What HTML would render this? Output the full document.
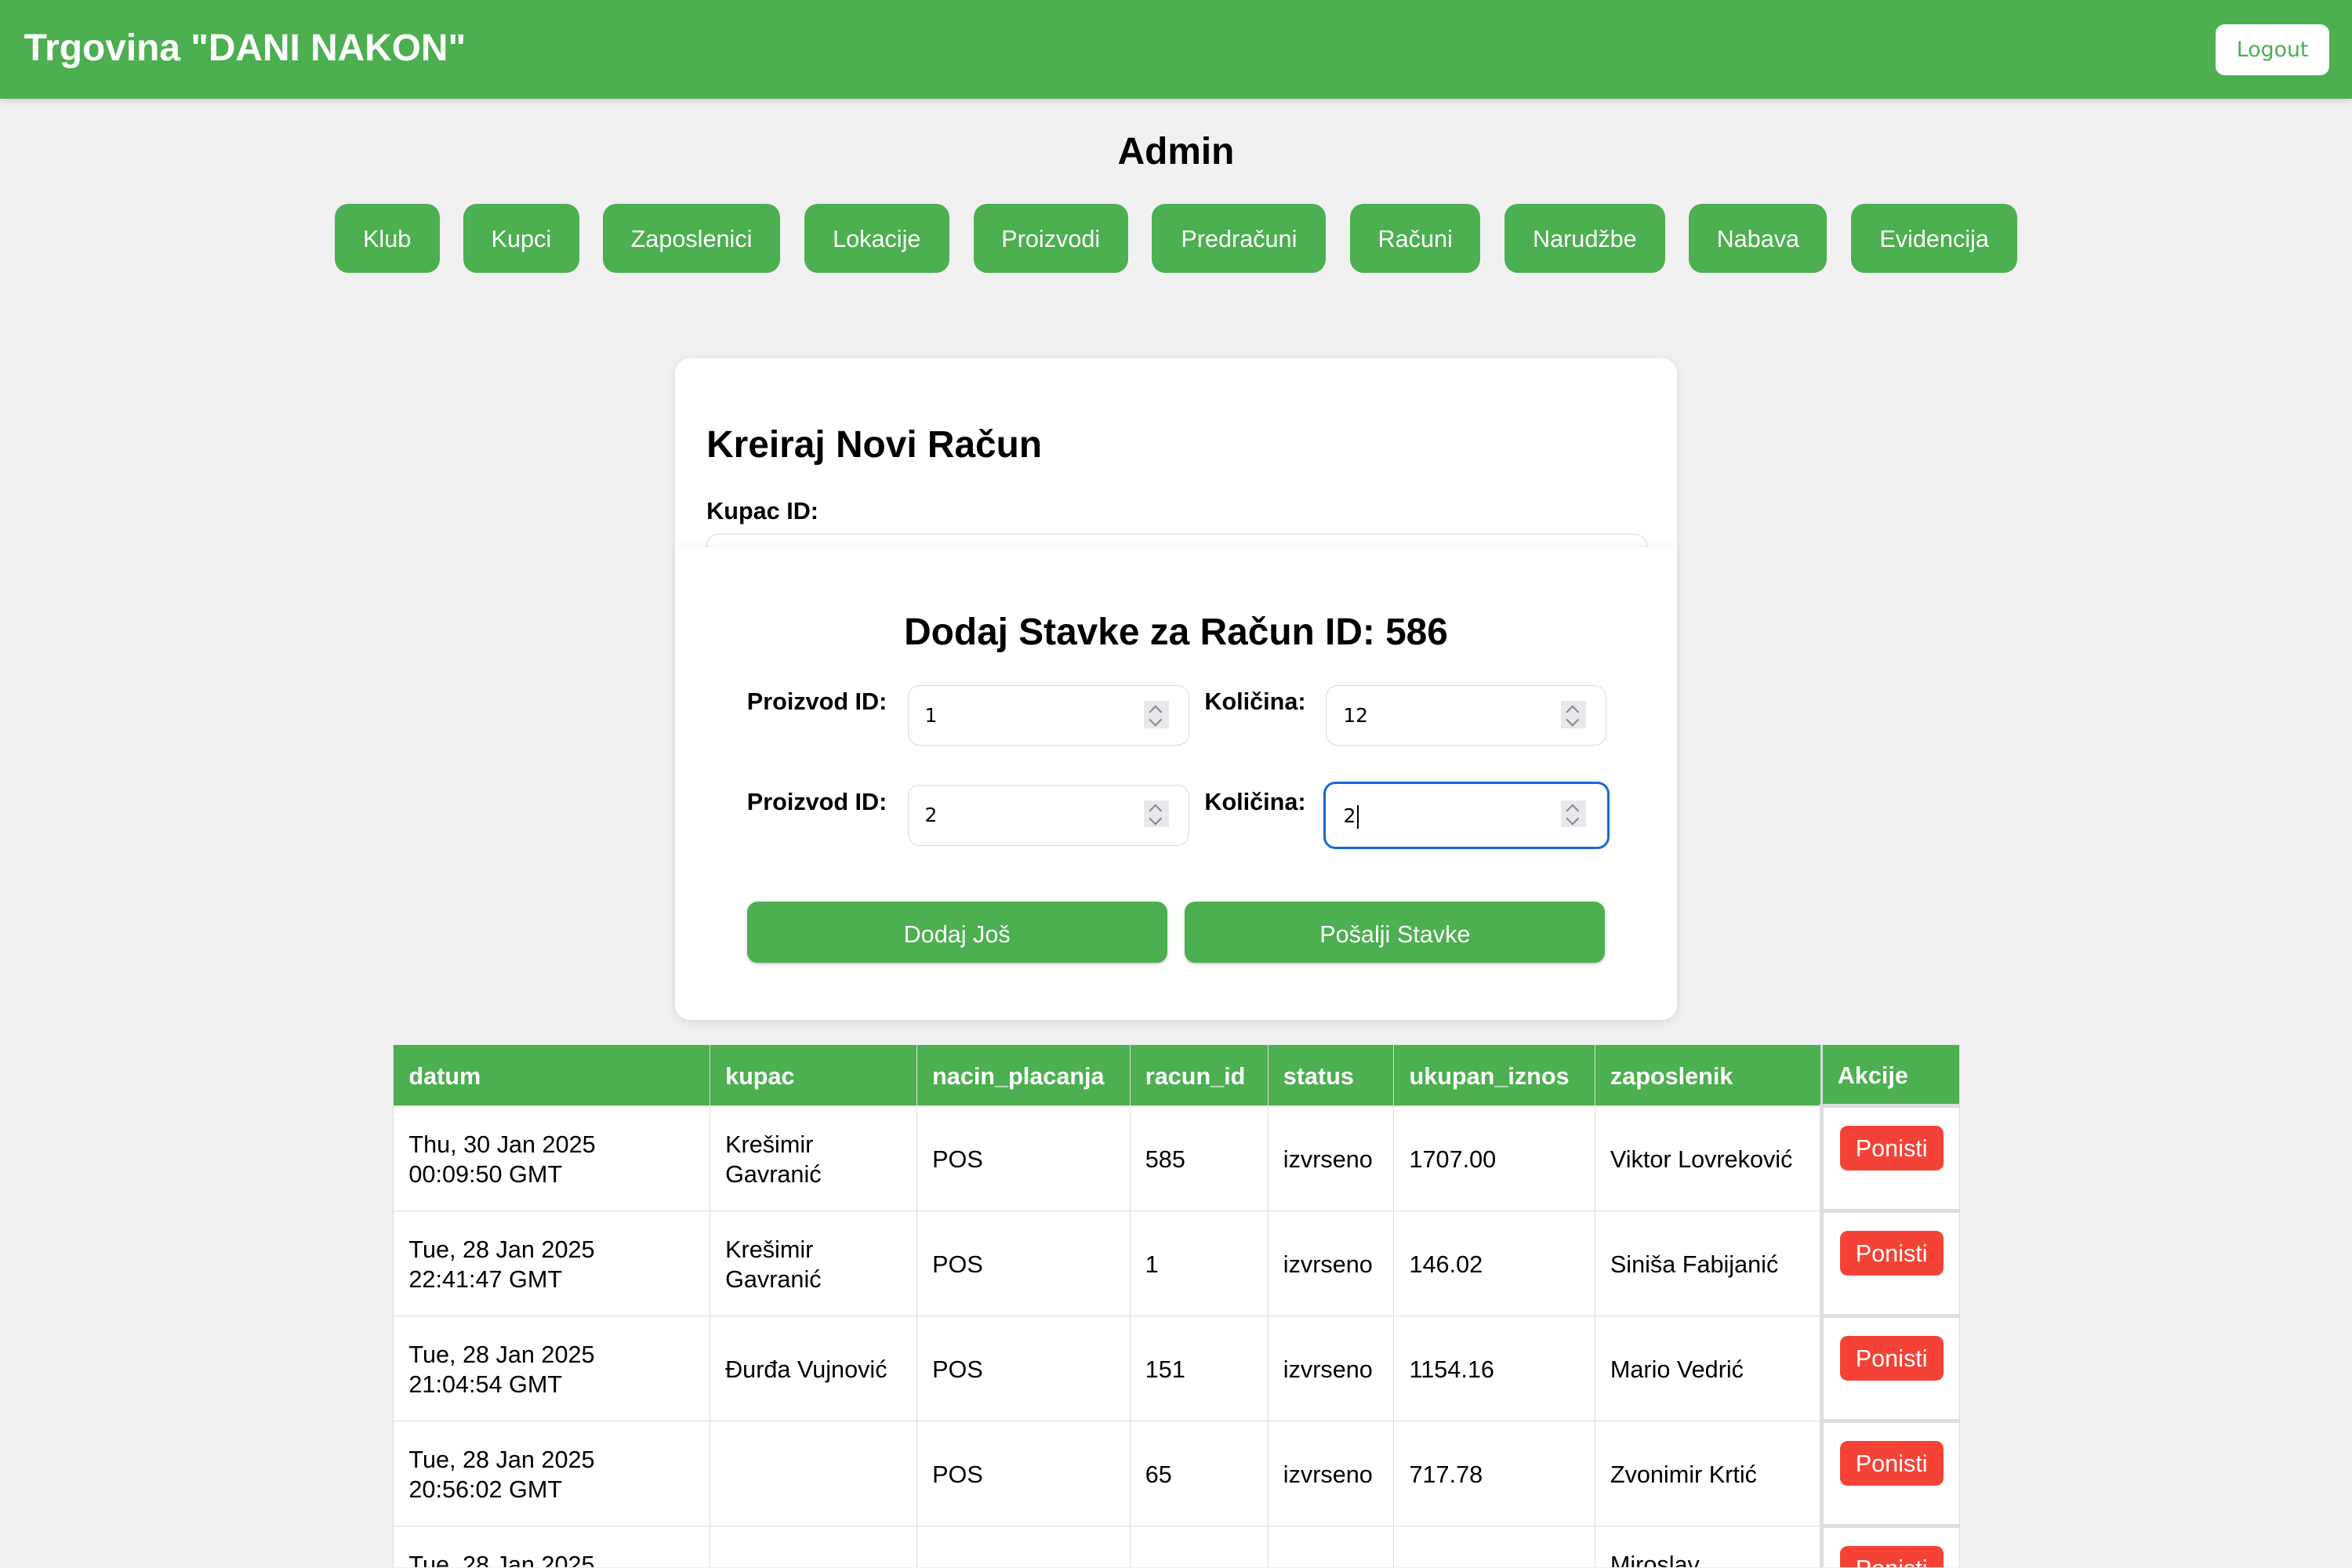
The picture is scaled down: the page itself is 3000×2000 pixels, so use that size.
<!DOCTYPE html>
<html><head><meta charset="utf-8"><style>
html,body{margin:0;padding:0;width:3000px;height:2000px;overflow:hidden;background:#f1f1f1;}
#w{zoom:1.91327;width:1568px;height:1045px;position:relative;overflow:hidden;font-family:"Liberation Sans",Arial,sans-serif;}
.a{position:absolute;}
.hdr{left:0;top:0;width:1568px;height:66px;background:#4caf50;box-shadow:0 2px 5px rgba(0,0,0,.12);}
.ttl{left:16px;top:18px;font-size:25px;font-weight:bold;color:#fff;white-space:nowrap;}
.lo{left:1477px;top:16px;width:76px;height:34px;background:#fff;border-radius:6px;color:#4caf50;font-size:14px;text-align:center;line-height:35px;font-family:"DejaVu Sans",sans-serif;}
.adm{left:0;width:1568px;top:87px;text-align:center;font-size:25px;font-weight:bold;}
.nb{top:136px;height:46px;background:#4caf50;border-radius:9px;color:#fff;font-size:16px;line-height:48px;text-align:center;}
.card{left:450px;top:239px;width:668px;height:441px;background:#fff;border-radius:10px;box-shadow:0 2px 8px rgba(0,0,0,.1);}
.lbl{font-size:16px;font-weight:bold;}
.inp{height:38px;border:1px solid #d8d8d8;border-radius:8px;background:#fff;box-sizing:border-box;font-size:13px;font-family:"DejaVu Sans",sans-serif;line-height:40px;padding-left:11px;}
.sp{position:absolute;right:13px;top:10px;width:17px;height:18px;background:#e8e8ec;}
.sp:before{content:"";position:absolute;left:5px;top:4px;width:5px;height:5px;border-left:1.3px solid #888;border-top:1.3px solid #888;transform:rotate(45deg);}
.sp:after{content:"";position:absolute;left:5px;top:9px;width:5px;height:5px;border-right:1.3px solid #888;border-bottom:1.3px solid #888;transform:rotate(45deg);}
.gb{top:601px;height:41px;width:280px;background:#4caf50;border-radius:7px;color:#fff;font-size:16px;text-align:center;line-height:44px;box-shadow:0 1px 2px rgba(0,0,0,.2);}
table{position:absolute;left:262px;top:696px;border-collapse:collapse;table-layout:fixed;width:1044px;font-size:16px;}
th{background:#4caf50;color:#fff;text-align:left;height:41px;padding:2px 0 0 10px;border:1px solid #ddd;font-size:16px;box-sizing:border-box;}
td{background:#fff;height:70px;padding:2px 0 0 10px;border:1px solid #ddd;vertical-align:middle;box-sizing:border-box;line-height:20px;}
td.ak{vertical-align:top;padding:12px 0 0 11px;border-left:3px solid #ddd;border-top:3px solid #ddd;}
th.ak{border-left:2px solid #ddd;}
.pn{display:inline-block;background:#f44336;color:#fff;border-radius:5px;width:69px;height:30px;line-height:31px;text-align:center;font-size:16px;}
.caret{display:inline-block;width:1px;height:16px;background:#000;vertical-align:middle;margin-left:1px;}
</style></head><body><div id="w">
<div class="a hdr"></div>
<div class="a ttl">Trgovina "DANI NAKON"</div>
<div class="a lo">Logout</div>
<div class="a adm">Admin</div>
<div class="a nb" style="left:223px;width:70px">Klub</div>
<div class="a nb" style="left:309px;width:77px">Kupci</div>
<div class="a nb" style="left:402px;width:118px">Zaposlenici</div>
<div class="a nb" style="left:536px;width:97px">Lokacije</div>
<div class="a nb" style="left:649px;width:103px">Proizvodi</div>
<div class="a nb" style="left:768px;width:116px">Predračuni</div>
<div class="a nb" style="left:900px;width:87px">Računi</div>
<div class="a nb" style="left:1003px;width:107px">Narudžbe</div>
<div class="a nb" style="left:1126px;width:92px">Nabava</div>
<div class="a nb" style="left:1234px;width:111px">Evidencija</div>

<div class="a card"></div>
<div class="a" style="left:471px;top:282px;font-size:25px;font-weight:bold">Kreiraj Novi Račun</div>
<div class="a lbl" style="left:471px;top:332px">Kupac ID:</div>
<div class="a" style="left:471px;top:356px;width:627px;height:30px;border:1px solid #ddd;border-radius:8px;box-sizing:border-box"></div>
<div class="a" style="left:450px;top:365px;width:668px;height:315px;background:#fff;border-radius:0 0 10px 10px;box-shadow:0 -2px 4px rgba(0,0,0,.04)"></div>
<div class="a" style="left:450px;width:668px;top:407px;text-align:center;font-size:25px;font-weight:bold">Dodaj Stavke za Račun ID: 586</div>

<div class="a lbl" style="left:498px;top:459px">Proizvod ID:</div>
<div class="a inp" style="left:605px;top:457px;width:188px;height:40px">1<span class="sp"></span></div>
<div class="a lbl" style="left:803px;top:459px">Količina:</div>
<div class="a inp" style="left:884px;top:457px;width:187px;height:40px">12<span class="sp"></span></div>

<div class="a lbl" style="left:498px;top:526px">Proizvod ID:</div>
<div class="a inp" style="left:605px;top:523px;width:188px;height:41px">2<span class="sp"></span></div>
<div class="a lbl" style="left:803px;top:526px">Količina:</div>
<div class="a inp" style="left:882px;top:521px;width:191px;height:45px;border:2px solid #1a66d6;line-height:43px;padding-left:12px">2<span class="caret"></span><span class="sp" style="top:11px;right:14px"></span></div>

<div class="a gb" style="left:498px">Dodaj Još</div>
<div class="a gb" style="left:790px">Pošalji Stavke</div>

<table>
<colgroup><col style="width:211px"><col style="width:138px"><col style="width:142px"><col style="width:92px"><col style="width:84px"><col style="width:134px"><col style="width:151px"><col style="width:92px"></colgroup>
<tr><th>datum</th><th>kupac</th><th>nacin_placanja</th><th>racun_id</th><th>status</th><th>ukupan_iznos</th><th>zaposlenik</th><th class="ak">Akcije</th></tr>
<tr><td>Thu, 30 Jan 2025<br>00:09:50 GMT</td><td>Krešimir<br>Gavranić</td><td>POS</td><td>585</td><td>izvrseno</td><td>1707.00</td><td>Viktor Lovreković</td><td class="ak"><span class="pn">Ponisti</span></td></tr>
<tr><td>Tue, 28 Jan 2025<br>22:41:47 GMT</td><td>Krešimir<br>Gavranić</td><td>POS</td><td>1</td><td>izvrseno</td><td>146.02</td><td>Siniša Fabijanić</td><td class="ak"><span class="pn">Ponisti</span></td></tr>
<tr><td>Tue, 28 Jan 2025<br>21:04:54 GMT</td><td>Đurđa Vujnović</td><td>POS</td><td>151</td><td>izvrseno</td><td>1154.16</td><td>Mario Vedrić</td><td class="ak"><span class="pn">Ponisti</span></td></tr>
<tr><td>Tue, 28 Jan 2025<br>20:56:02 GMT</td><td></td><td>POS</td><td>65</td><td>izvrseno</td><td>717.78</td><td>Zvonimir Krtić</td><td class="ak"><span class="pn">Ponisti</span></td></tr>
<tr><td>Tue, 28 Jan 2025<br>20:00:00 GMT</td><td></td><td>POS</td><td>12</td><td>izvrseno</td><td>100.00</td><td>Miroslav<br>Horvat</td><td class="ak"><span class="pn">Ponisti</span></td></tr>
</table>
</div></body></html>
